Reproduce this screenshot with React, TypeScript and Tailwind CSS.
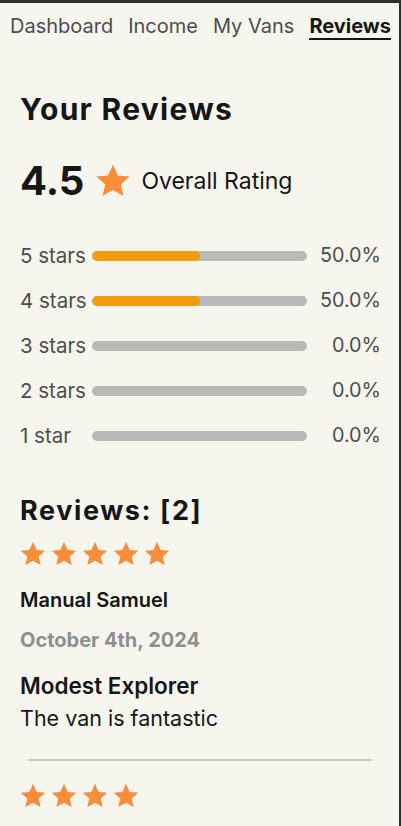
import React from 'react';

interface Review {
  rating: number;
  name: string;
  date: string;
  title: string;
  text: string;
}

const breakdown = [
  { label: '5 stars', pct: 50 },
  { label: '4 stars', pct: 50 },
  { label: '3 stars', pct: 0 },
  { label: '2 stars', pct: 0 },
  { label: '1 star', pct: 0 },
];

const reviews: Review[] = [
  { rating: 5, name: 'Manual Samuel', date: 'October 4th, 2024', title: 'Modest Explorer', text: 'The van is fantastic' },
  { rating: 4, name: 'Jane Doe', date: 'September 12th, 2024', title: 'Great trip', text: 'Would rent again' },
];

function Star({ size }: { size: number }) {
  return (
    <svg width={size} height={size} viewBox="0 0 24 24" className="shrink-0">
      <path
        fill="#ff8c38"
        d="M12 1.6l3.1 6.9 7.4.7-5.6 5 1.7 7.3L12 17.7l-6.6 3.8 1.7-7.3-5.6-5 7.4-.7z"
      />
    </svg>
  );
}

export default function App() {
  const nav = ['Dashboard', 'Income', 'My Vans', 'Reviews'];
  return (
    <div
      className="min-h-[826px] bg-[#f7f6ee] border-t-[3px] border-r-2 border-[#2f2f2f] text-[#161616] overflow-hidden"
      style={{ fontFamily: 'Inter, "Noto Sans", sans-serif' }}
    >
      <nav className="flex items-start gap-[15px] pl-[10px] pt-[11px] h-[37px] text-[20px]">
        {nav.map((n) => (
          <span
            key={n}
            className={
              n === 'Reviews'
                ? 'font-bold text-[#161616] border-b-2 border-[#161616] leading-[24px]'
                : 'text-[#4d4d4d] leading-[24px]'
            }
          >
            {n}
          </span>
        ))}
      </nav>

      <main className="pl-5 pr-[18px]">
        <h1 className="mt-[54px] text-[30px] font-bold tracking-[1.3px] leading-none">Your Reviews</h1>

        <div className="mt-[37px] flex items-center">
          <span className="text-[40px] font-bold leading-none">4.5</span>
          <span className="ml-[10px]">
            <Star size={38} />
          </span>
          <span className="ml-[9px] text-[23px]">Overall Rating</span>
        </div>

        <div className="mt-[43px] flex flex-col gap-[21px]">
          {breakdown.map((b) => (
            <div key={b.label} className="flex items-center h-[24px]">
              <span className="w-[72px] text-[20.5px] text-[#4d4d4d]">{b.label}</span>
              <div className="w-[215px] h-[10px] rounded-full bg-[#b9b9b9] overflow-hidden">
                <div className="h-full rounded-full bg-[#f59a0b]" style={{ width: `${b.pct}%` }} />
              </div>
              <span className="flex-1 text-right text-[19.8px] text-[#4d4d4d]">{b.pct.toFixed(1)}%</span>
            </div>
          ))}
        </div>

        <h2 className="mt-[49px] text-[27px] font-bold tracking-[1.6px] leading-none">Reviews: [{reviews.length}]</h2>

        {reviews.map((r, i) => (
          <div key={i}>
            {i > 0 && <hr className="mt-[28px] ml-[9px] mr-[10px] border-t-2 border-[#c7c7c7]" />}
            <div className={`-ml-px flex gap-[3px] ${i > 0 ? 'mt-[21px]' : 'mt-[16px]'}`}>
              {Array.from({ length: r.rating }).map((_, k) => (
                <Star key={k} size={28} />
              ))}
            </div>
            {i === 0 && (
              <>
                <p className="mt-[20px] text-[20px] leading-[24px] font-semibold">{r.name}</p>
                <p className="mt-[16px] text-[20px] leading-[24px] font-bold text-[#8f8f8f]">{r.date}</p>
                <h3 className="mt-[20px] text-[22.5px] leading-[28px] font-semibold">{r.title}</h3>
                <p className="mt-[5px] text-[21.5px] leading-[26px]">{r.text}</p>
              </>
            )}
          </div>
        ))}
      </main>
    </div>
  );
}
